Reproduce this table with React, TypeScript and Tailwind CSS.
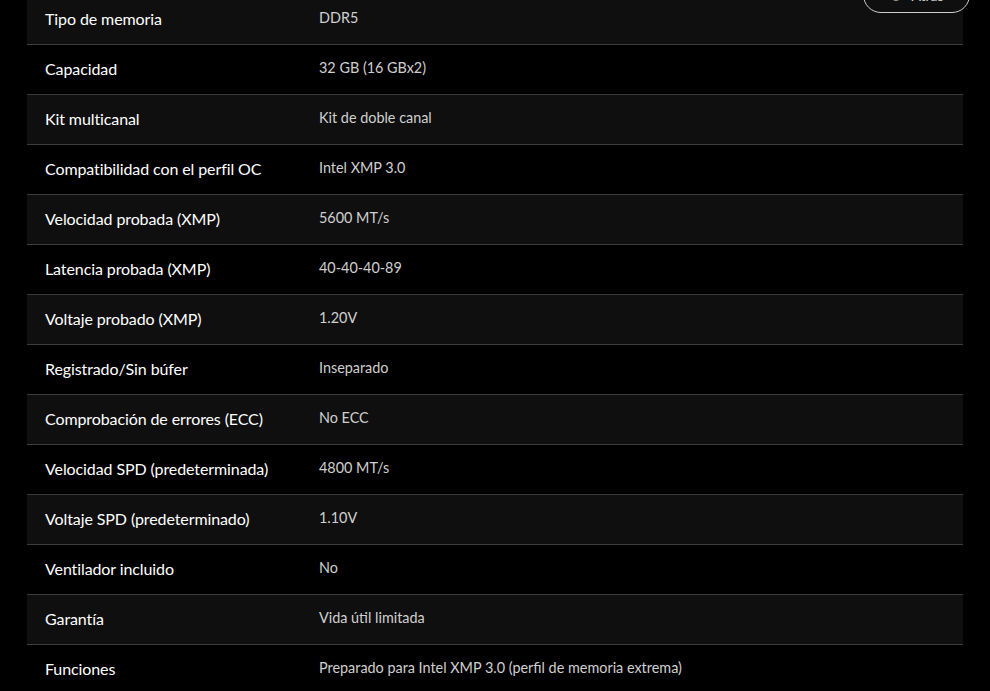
import { RotateCcw } from "lucide-react";

const specs: [string, string][] = [
  ["Tipo de memoria", "DDR5"],
  ["Capacidad", "32 GB (16 GBx2)"],
  ["Kit multicanal", "Kit de doble canal"],
  ["Compatibilidad con el perfil OC", "Intel XMP 3.0"],
  ["Velocidad probada (XMP)", "5600 MT/s"],
  ["Latencia probada (XMP)", "40-40-40-89"],
  ["Voltaje probado (XMP)", "1.20V"],
  ["Registrado/Sin búfer", "Inseparado"],
  ["Comprobación de errores (ECC)", "No ECC"],
  ["Velocidad SPD (predeterminada)", "4800 MT/s"],
  ["Voltaje SPD (predeterminado)", "1.10V"],
  ["Ventilador incluido", "No"],
  ["Garantía", "Vida útil limitada"],
  ["Funciones", "Preparado para Intel XMP 3.0 (perfil de memoria extrema)"],
];

export default function App() {
  return (
    <div className="relative h-[691px] overflow-hidden bg-black font-['Lato','Liberation_Sans',sans-serif]">
      <div className="mx-[27px] -mt-[5px]">
        {specs.map(([label, value], i) => (
          <div
            key={label}
            className={`grid h-[50px] grid-cols-[274px_1fr] items-center border-b border-[#3c3c3c] px-[18px] ${
              i % 2 === 0 ? "bg-[#0f0f0f]" : "bg-black"
            }`}
          >
            <span className="pb-[2px] text-[16px] font-normal tracking-[-0.1px] text-white">{label}</span>
            <span className="pb-[4px] text-[14.4px] text-[#cfcfcf]">{value}</span>
          </div>
        ))}
      </div>

      <button className="absolute -top-[23px] right-[20px] flex h-[36px] w-[107px] items-center justify-center gap-2 rounded-full border border-[#cfcfcf] bg-[#0f0f0f] text-[14px] text-[#cfcfcf]">
        <RotateCcw size={14} />
        Atrás
      </button>
    </div>
  );
}
